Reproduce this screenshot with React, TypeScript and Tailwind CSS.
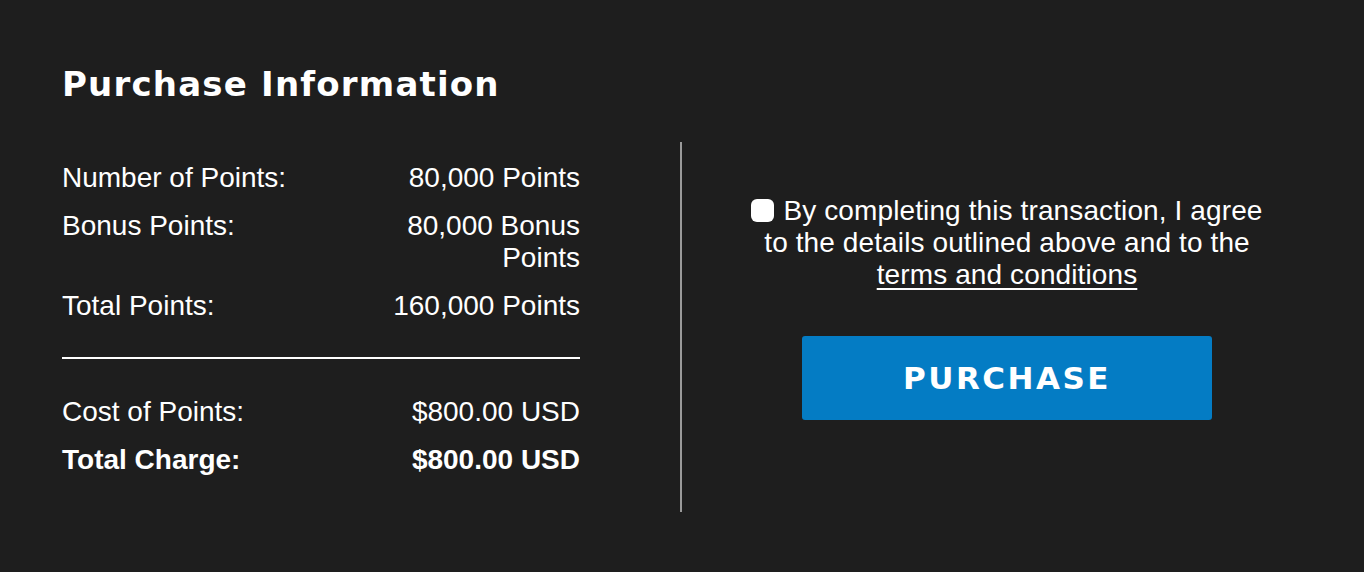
const rows = [
  { label: "Number of Points:", value: "80,000 Points" },
  { label: "Bonus Points:", value: "80,000 Bonus Points" },
  { label: "Total Points:", value: "160,000 Points" },
];

const sans = "font-['Liberation_Sans',Arial,sans-serif]";
const display = "font-['DejaVu_Sans',sans-serif]";

export default function App() {
  return (
    <div className="min-h-[572px] w-full bg-[#1e1e1e] text-white">
      <div className="pl-[62px] pr-[32px] pt-[64px] pb-[60px]">
        <h1 className={`${display} text-[34px] font-bold leading-[40px] tracking-[0.035em]`}>
          Purchase Information
        </h1>

        <div className="mt-[38px] flex">
          {/* summary */}
          <div className={`w-[518px] pt-[20px] pb-[36px] ${sans} text-[28px] leading-[32px]`}>
            <div className="flex flex-col gap-[16px]">
              {rows.map((r) => (
                <div key={r.label} className="flex justify-between">
                  <span>{r.label}</span>
                  <span className="w-[200px] text-right">{r.value}</span>
                </div>
              ))}
            </div>
            <div className="mt-[35px] mb-[37px] h-[2px] bg-white" />
            <div className="flex flex-col gap-[16px]">
              <div className="flex justify-between">
                <span>Cost of Points:</span>
                <span className="w-[200px] text-right">$800.00 USD</span>
              </div>
              <div className="flex justify-between font-bold">
                <span>Total Charge:</span>
                <span className="w-[200px] text-right">$800.00 USD</span>
              </div>
            </div>
          </div>

          <div className="ml-[100px] w-[2px] bg-[#9a9a9a]" />

          {/* agreement */}
          <div className="flex flex-1 flex-col items-center pt-[53px]">
            <label className={`whitespace-nowrap text-center ${sans} text-[28px] leading-[32px] tracking-[0.004em]`}>
              <input
                type="checkbox"
                className="mr-[9px] inline-block h-[23px] w-[23px] appearance-none rounded-[6px] bg-white align-[-2px]"
              />
              By completing this transaction, I agree
              <br />
              to the details outlined above and to the
              <br />
              <a href="#" className="underline underline-offset-[4px]">
                terms and conditions
              </a>
            </label>

            <button className={`mt-[45px] h-[84px] w-[410px] rounded-[3px] bg-[#047cc4] ${display} text-[31px] font-bold tracking-[0.08em] text-white`}>
              PURCHASE
            </button>
          </div>
        </div>
      </div>
    </div>
  );
}
